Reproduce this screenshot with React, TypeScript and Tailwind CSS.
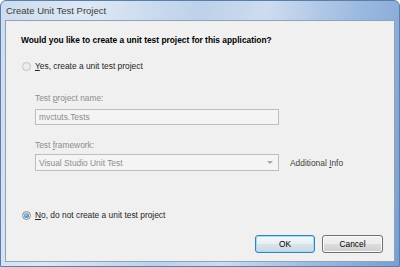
import React from 'react';

const font = { fontFamily: '"Liberation Sans", Arial, sans-serif' };

function Radio({ checked, disabled }: { checked?: boolean; disabled?: boolean }) {
  return (
    <span
      className={`w-[9px] h-[9px] rounded-full border flex items-center justify-center shrink-0 ${
        disabled ? 'border-[#c2c2c2] bg-[#ececec]' : 'border-[#8a8a8a] bg-[linear-gradient(135deg,#d8d8d8,#ffffff)]'
      }`}
    >
      {checked && <span className="w-[5px] h-[5px] rounded-full bg-[radial-gradient(circle_at_40%_35%,#8fd3ff,#1d5fa5)]" />}
    </span>
  );
}

export default function App() {
  return (
    <div
      className="w-[400px] h-[267px] flex flex-col border border-[#5a7fa8] rounded-t-[6px] overflow-hidden bg-[linear-gradient(100deg,#cddcef_0%,#dde8f5_20%,#bcd1ea_45%,#cddcf0_60%,#9dbbe0_80%,#789fd2_100%)] text-[8.4px] leading-[12px] text-[#1e1e1e]"
      style={font}
    >
      <div className="h-[19px] flex items-center pl-[5px] text-[#3c3c3c] text-[9.5px]">Create Unit Test Project</div>

      <div className="flex-1 mx-[4px] mb-[4px] border border-[#8fa2b8] bg-[#f0f0f0] flex flex-col px-[15px]">
        <div className="mt-[13px] font-bold text-[8.4px] text-black">Would you like to create a unit test project for this application?</div>

        <div className="mt-[14px] flex items-center gap-[4px] pl-[1px]">
          <Radio disabled />
          <span><u>Y</u>es, create a unit test project</span>
        </div>

        <div className="pl-[14px] flex flex-col">
          <div className="mt-[20px] text-[#8d8d8d]">Test <u>p</u>roject name:</div>
          <div className="mt-[5px] w-[244px] h-[16px] border border-[#b9bec2] bg-[#f4f4f4] flex items-center pl-[3px] text-[#8d8d8d]">mvctuts.Tests</div>

          <div className="mt-[14px] text-[#8d8d8d]">Test <u>f</u>ramework:</div>
          <div className="mt-[3px] flex items-center">
            <div className="w-[244px] h-[17px] border border-[#b9bec2] bg-[#f4f4f4] flex items-center pl-[3px] pr-[5px] text-[#8d8d8d]">
              <span className="flex-1">Visual Studio Unit Test</span>
              <span className="w-0 h-0 border-l-[3px] border-r-[3px] border-t-[3px] border-l-transparent border-r-transparent border-t-[#a8a8a8]" />
            </div>
            <span className="ml-[11px] text-[#404040]">Additional <u>I</u>nfo</span>
          </div>
        </div>

        <div className="mt-[38px] flex items-center gap-[4px] pl-[1px]">
          <Radio checked />
          <span><u>N</u>o, do not create a unit test project</span>
        </div>

        <div className="mt-[14px] flex justify-end gap-[7px] mr-[-4px]">
          <button className="w-[60px] h-[18px] rounded-[3px] border border-[#3c7fb1] shadow-[inset_0_0_0_1px_#98e0f8] bg-[linear-gradient(#f4f8fb_0%,#e8eef3_50%,#dbe3ea_51%,#ccd7e0_100%)] text-[8.4px] text-black" style={font}>
            OK
          </button>
          <button className="w-[61px] h-[18px] rounded-[3px] border border-[#707070] shadow-[inset_0_0_0_1px_#fbfbfb] bg-[linear-gradient(#f2f2f2_0%,#ebebeb_50%,#dddddd_51%,#cfcfcf_100%)] text-[8.4px] text-black" style={font}>
            Cancel
          </button>
        </div>
      </div>
    </div>
  );
}
